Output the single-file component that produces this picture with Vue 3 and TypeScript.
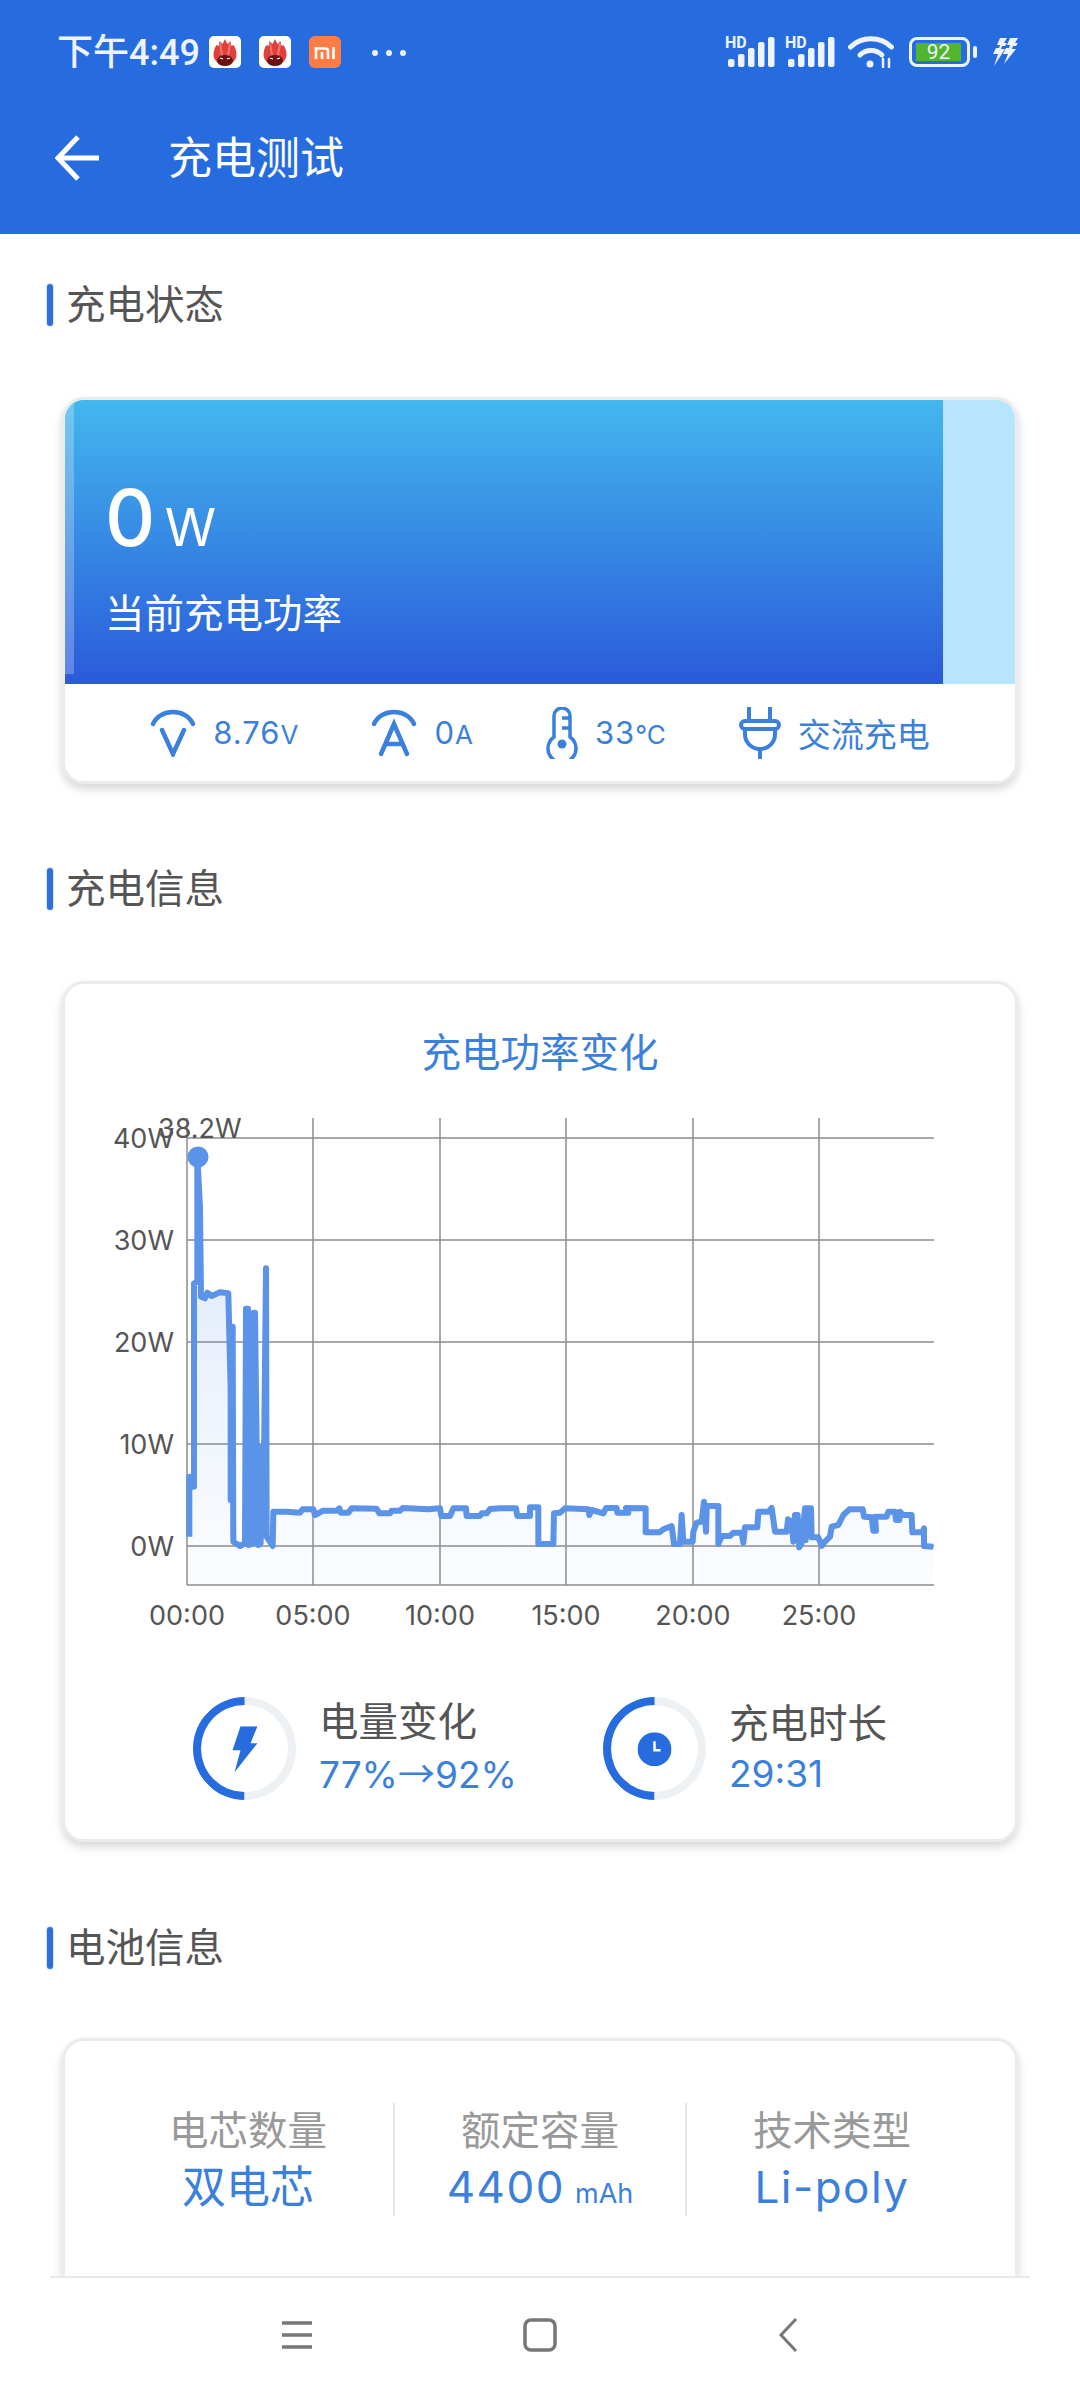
<script setup lang="ts">
import { computed } from "vue";

interface Stat {
  label: string;
  value: string;
  unit?: string;
  latin?: boolean;
}

const batteryStats: Stat[] = [
  { label: "电芯数量", value: "双电芯" },
  { label: "额定容量", value: "4400", unit: "mAh", latin: true },
  { label: "技术类型", value: "Li-poly", latin: true },
];

const yTicks = [
  { label: "40W", y: 1138 },
  { label: "30W", y: 1240 },
  { label: "20W", y: 1342 },
  { label: "10W", y: 1444 },
  { label: "0W", y: 1546 },
];
const xTicks = [
  { label: "00:00", x: 187 },
  { label: "05:00", x: 313 },
  { label: "10:00", x: 440 },
  { label: "15:00", x: 566 },
  { label: "20:00", x: 693 },
  { label: "25:00", x: 819 },
];

// traced from the recording, [x, y] in page pixels
const headSamples = [
  [268, 1340], [268, 1160], [278, 1160], [278, 1190], [282, 1190], [282, 580], [292, 575], [292, 200],
  [300, 350], [303, 620], [315, 625], [322, 608], [335, 618], [360, 607], [385, 610], [392, 900],
  [392, 1230], [398, 710], [400, 1355], [420, 1368], [435, 1360], [438, 656], [444, 656], [446, 1365],
  [460, 1360], [461, 668], [465, 668], [470, 1060], [475, 1365], [482, 1360], [486, 1070], [490, 1300],
  [498, 535], [500, 1340], [518, 1368], [520, 1265], [560, 1265], [600, 1268], [608, 1258], [640, 1258],
  [645, 1275], [670, 1262], [710, 1262], [718, 1255], [722, 1268], [745, 1268], [755, 1255], [830, 1256],
  [838, 1270], [870, 1270], [875, 1262], [900, 1262], [908, 1254], [985, 1258], [1020, 1255], [1024, 1278],
  [1050, 1278], [1060, 1255], [1098, 1255], [1100, 1278], [1140, 1278], [1145, 1270], [1160, 1270],
  [1170, 1257], [1200, 1258],
].map(([x, y]) => [100 + x / 3, 1090 + y / 3]);

const tailSamples = [
  [0, 325], [48, 325], [52, 348], [90, 348], [90, 322], [115, 322], [115, 432], [160, 432], [162, 340],
  [180, 338], [195, 325], [265, 328], [268, 345], [275, 330], [310, 340], [318, 324], [350, 324], [352, 338],
  [385, 338], [378, 324], [437, 325], [437, 397], [478, 397], [490, 388], [515, 378], [522, 432], [540, 432],
  [545, 345], [550, 425], [578, 425], [580, 395], [590, 368], [605, 365], [612, 305], [618, 395], [620, 318],
  [655, 318], [655, 432], [665, 408], [690, 408], [700, 398], [725, 398], [730, 428], [735, 382], [772, 382],
  [775, 335], [805, 335], [815, 324], [825, 395], [860, 395], [864, 358], [875, 365], [880, 425], [885, 345],
  [893, 345], [898, 442], [905, 430], [915, 325], [917, 420], [922, 325], [933, 325], [935, 412], [955, 412],
  [965, 438], [975, 425], [990, 410], [995, 380], [1015, 375], [1030, 345], [1048, 328], [1088, 328],
  [1092, 350], [1115, 352], [1120, 392], [1128, 392], [1125, 350], [1160, 350], [1165, 335], [1185, 335],
  [1188, 360], [1198, 360], [1200, 335], [1208, 345], [1235, 345], [1237, 397], [1268, 397], [1272, 385],
  [1272, 438], [1300, 440],
].map(([x, y]) => [500 + x / 3, 1400 + y / 3]);

const linePoints = computed(() =>
  [...headSamples.slice(0, -1), ...tailSamples].map((p) => p.join(",")).join(" "),
);
const areaPoints = computed(() => `189,1585 ${linePoints.value} 934,1585`);
</script>

<template>
  <div class="screen">
    <header class="appbar">
      <div class="status">
        <span class="clock">下午4:49</span>
        <svg v-for="n in 2" :key="n" class="app-icon" viewBox="0 0 32 32">
          <rect width="32" height="32" rx="5" fill="#fff" />
          <path d="M16 3l2.500 5 3-3 1 5 2-1c2 3 3 6 3 10 0 5-5 10-11.500 10S4.500 24 4.500 19c0-4 1-7 3-10l2 1 1-5 3 3z" fill="#e0403c" />
          <path d="M11 7l2 12M21 7l-2 12" stroke="#f6736c" stroke-width="2" />
          <ellipse cx="16" cy="24.500" rx="8" ry="5.500" fill="#6d1010" />
          <path d="M11 22l3 1M21 22l-3 1" stroke="#fff" stroke-width="1.300" />
        </svg>
        <svg class="app-icon" viewBox="0 0 32 32">
          <rect width="32" height="32" rx="6" fill="#ff7d45" />
          <path d="M7 12.500h9.500a2.500 2.500 0 0 1 2.500 2.500v8M7 11v12M13 16v7M24.500 11v12" fill="none" stroke="#fff" stroke-width="2.600" />
        </svg>
        <span class="dots"><i></i><i></i><i></i></span>
        <span class="status-right">
          <svg v-for="n in 2" :key="n" class="signal" viewBox="0 0 50 32">
            <text x="0" y="12" class="hd">HD</text>
            <rect x="3" y="23" width="6.500" height="8" rx="2" />
            <rect x="13" y="18" width="6.500" height="13" rx="2" />
            <rect x="23" y="12" width="6.500" height="19" rx="2" />
            <rect x="33" y="6" width="6.500" height="25" rx="2" />
            <rect x="43" y="1" width="6.500" height="30" rx="2" />
          </svg>
          <svg class="wifi" viewBox="0 0 46 32" fill="none" stroke="#eef4ff" stroke-width="5" stroke-linecap="round">
            <path d="M2.500 11c11-11 30-11 41 0" />
            <path d="M12 19c6-6 16-6 22 0" />
            <circle cx="22" cy="28" r="3.500" fill="#eef4ff" stroke="none" />
            <path d="M35 23v8M41 23v8" stroke-width="2.500" />
          </svg>
          <span class="battery"><b>92</b></span>
          <svg class="charge" viewBox="0 0 26 28" fill="#eef4ff">
            <path d="M8 0h7l-3 5h3l-2 3h-3l-1 3h4L2 28l4-12H1l3-6h3l1-3H5z" />
            <path d="M18 0h8l-3 5h3l-2 3h-3l-1 3h4L12 26l4-10h-5l3-6h3l1-3h-3z" />
          </svg>
        </span>
      </div>
      <div class="toolbar">
        <svg class="back" viewBox="0 0 44 46" fill="none" stroke="#fff" stroke-width="5">
          <path d="M44 23H4" />
          <path d="M23 2L3 23l20 21" />
        </svg>
        <h1>充电测试</h1>
      </div>
    </header>

    <main class="content">
      <h2 class="section-title">充电状态</h2>
      <section class="card power-card">
        <div class="power-track">
          <div class="power-fill">
            <p class="power-value"><b>0</b> <span>W</span></p>
            <p class="power-label">当前充电功率</p>
          </div>
        </div>
        <div class="metrics">
          <div class="metric">
            <svg class="metric-icon" viewBox="0 0 46 48" fill="none" stroke="#3a80dc" stroke-width="4.500" stroke-linecap="round">
              <path d="M3 15C10 -1 36 -1 43 15" />
              <path d="M12 21l11 24 11-24" />
            </svg>
            <span>8.76<small>V</small></span>
          </div>
          <div class="metric">
            <svg class="metric-icon" viewBox="0 0 46 48" fill="none" stroke="#3a80dc" stroke-width="4.500" stroke-linecap="round">
              <path d="M3 15C10 -1 36 -1 43 15" />
              <path d="M10 45l13-30 13 30M15 35h16" />
            </svg>
            <span>0<small>A</small></span>
          </div>
          <div class="metric">
            <svg class="metric-icon thermo" viewBox="0 0 32 52" fill="none" stroke="#3a80dc" stroke-width="3.500">
              <path d="M8 30V9a8 8 0 0 1 16 0v21a14 14 0 1 1-16 0z" />
              <path d="M16 11h8M16 21h8" />
              <circle cx="16" cy="37" r="4.500" fill="#3a80dc" stroke="none" />
            </svg>
            <span>33<small>℃</small></span>
          </div>
          <div class="metric">
            <svg class="metric-icon plug" viewBox="0 0 42 52" fill="none" stroke="#3a80dc" stroke-width="4">
              <path d="M10 0v14M31 0v14" />
              <rect x="2" y="14" width="38" height="8" rx="4" />
              <path d="M6 22v5c0 9 7 15 15 15s15-6 15-15v-5" />
              <path d="M21 42v10" />
            </svg>
            <span class="metric-name">交流充电</span>
          </div>
        </div>
      </section>

      <h2 class="section-title second">充电信息</h2>
      <section class="card info-card">
        <h3 class="chart-title">充电功率变化</h3>
        <svg class="chart" viewBox="100 1100 860 540">
          <defs>
            <linearGradient id="area" x1="0" y1="1150" x2="0" y2="1585" gradientUnits="userSpaceOnUse">
              <stop offset="0" stop-color="#5b93e8" stop-opacity="0.22" />
              <stop offset="1" stop-color="#5b93e8" stop-opacity="0.02" />
            </linearGradient>
          </defs>
          <g class="grid">
            <line v-for="t in yTicks" :key="t.label" x1="187" x2="934" :y1="t.y" :y2="t.y" />
            <line v-for="t in xTicks" :key="t.label" :x1="t.x" :x2="t.x" y1="1118" y2="1585" />
            <line x1="187" x2="934" y1="1585" y2="1585" />
          </g>
          <polygon :points="areaPoints" fill="url(#area)" />
          <polyline class="series" :points="linePoints" />
          <circle cx="198" cy="1157" r="10.500" fill="#5b93e8" />
          <g class="axis-label">
            <text v-for="t in yTicks" :key="t.label" x="174" :y="t.y + 10" text-anchor="end">{{ t.label }}</text>
            <text v-for="t in xTicks" :key="t.label" :x="t.x" y="1625" text-anchor="middle">{{ t.label }}</text>
            <text x="158" y="1138">38.2W</text>
          </g>
        </svg>
        <div class="summary">
          <div class="summary-item">
            <span class="ring">
              <svg viewBox="0 0 26 46" class="ring-bolt"><path d="M9 0h17l-7 17h7L3 46l6-22H1z" fill="#266cdf" /></svg>
            </span>
            <div>
              <p class="summary-label">电量变化</p>
              <p class="summary-value">77%<span class="arrow">→</span>92%</p>
            </div>
          </div>
          <div class="summary-item">
            <span class="ring">
              <svg viewBox="0 0 34 34" class="ring-clock">
                <circle cx="17" cy="17" r="17" fill="#266cdf" />
                <path d="M17 9v9h6" fill="none" stroke="#fff" stroke-width="2.500" />
              </svg>
            </span>
            <div>
              <p class="summary-label">充电时长</p>
              <p class="summary-value">29:31</p>
            </div>
          </div>
        </div>
      </section>

      <h2 class="section-title third">电池信息</h2>
      <section class="card battery-card">
        <div v-for="s in batteryStats" :key="s.label" class="stat">
          <p class="stat-label">{{ s.label }}</p>
          <p class="stat-value" :class="{ latin: s.latin }">{{ s.value }}<small v-if="s.unit">{{ s.unit }}</small></p>
        </div>
      </section>
    </main>

    <nav class="navbar">
      <div class="nav-inner">
        <svg viewBox="0 0 32 28" class="nav-menu" stroke="#777" stroke-width="3.500">
          <path d="M1 2h30M1 14h30M1 26h30" />
        </svg>
        <svg viewBox="0 0 34 34" class="nav-home" fill="none" stroke="#777" stroke-width="3.500">
          <rect x="2" y="2" width="30" height="30" rx="6" />
        </svg>
        <svg viewBox="0 0 20 34" class="nav-back" fill="none" stroke="#777" stroke-width="3">
          <path d="M18 1L3 17l15 16" />
        </svg>
      </div>
    </nav>
  </div>
</template>

<style>
html,
body {
  margin: 0;
  background: #fff;
}
</style>

<style scoped>
.screen {
  width: 1080px;
  height: 2400px;
  display: flex;
  flex-direction: column;
  overflow: hidden;
  font-family: Inter, "Noto Sans CJK SC", sans-serif;
  background: #fff;
}
p,
h1,
h2,
h3 {
  margin: 0;
  font-weight: 400;
}
.appbar {
  height: 234px;
  flex: none;
  background: #266cdf;
  color: #fff;
}
.status {
  height: 104px;
  box-sizing: border-box;
  padding: 36px 62px 0 57px;
  display: flex;
  align-items: flex-start;
}
.clock {
  font-family: Roboto, "Noto Sans CJK SC", sans-serif;
  font-size: 36px;
  font-weight: 500;
  line-height: 34px;
  width: 152px;
  flex: none;
  white-space: nowrap;
  color: #eef4ff;
}
.app-icon {
  width: 32px;
  height: 32px;
  margin-right: 18px;
}
.dots {
  display: flex;
  gap: 8px;
  margin: 14px 0 0 13px;
}
.dots i {
  width: 6px;
  height: 6px;
  border-radius: 50%;
  background: #eef4ff;
}
.status-right {
  margin-left: auto;
  display: flex;
  align-items: center;
  gap: 10px;
}
.signal {
  width: 50px;
  height: 32px;
  fill: #eef4ff;
  overflow: visible;
}
.hd {
  font-size: 16px;
  font-family: Roboto, sans-serif;
  font-weight: 700;
}
.wifi {
  width: 46px;
  height: 32px;
  margin-left: 3px;
}
.battery {
  box-sizing: border-box;
  width: 61px;
  height: 30px;
  border: 3px solid #eef4ff;
  border-radius: 8px;
  padding: 3px 6px 3px 4px;
  position: relative;
  margin: 0 7px 0 5px;
}
.battery::after {
  content: "";
  position: absolute;
  right: -10px;
  top: 6px;
  width: 4px;
  height: 12px;
  border-radius: 2px;
  background: #eef4ff;
}
.battery b {
  display: block;
  height: 18px;
  background: #52b52f;
  color: #eef4ff;
  font-family: Roboto, sans-serif;
  font-size: 21px;
  font-weight: 400;
  line-height: 18px;
  text-align: center;
}
.charge {
  width: 26px;
  height: 28px;
  margin-left: 5px;
}
.toolbar {
  display: flex;
  align-items: center;
  padding: 24px 0 0 55px;
}
.back {
  width: 44px;
  height: 46px;
  margin-right: 69px;
}
.toolbar h1 {
  font-size: 44px;
  line-height: 60px;
}
.content {
  flex: 1;
  min-height: 0;
  overflow: hidden;
  padding: 41px 62px 0 62px;
}
.section-title {
  position: relative;
  height: 60px;
  margin-left: 4px;
  font-size: 39.500px;
  line-height: 60px;
  color: #555;
}
.section-title::before {
  content: "";
  position: absolute;
  left: -19px;
  top: 9px;
  width: 6px;
  height: 42px;
  border-radius: 3px;
  background: #2f6fdd;
  box-shadow: 0 0 0 1px #d9e6fa;
}
.section-title.second {
  margin-top: 75px;
}
.section-title.third {
  margin-top: 76px;
}
.card {
  margin-top: 62px;
  border: 3px solid #ececec;
  border-radius: 22px;
  background: #fff;
  box-shadow: 0 5px 10px rgba(0, 0, 0, 0.16);
  overflow: hidden;
}
.section-title.second + .card {
  margin-top: 62px;
}
.section-title.third + .card {
  margin-top: 60px;
}
.power-track {
  height: 284px;
  background: #b6e5fd;
}
.power-fill {
  position: relative;
  box-sizing: border-box;
  width: 878px;
  height: 100%;
  padding: 72px 0 0 40px;
  background: linear-gradient(180deg, #43b7ee, #2a5ada);
  color: #fff;
}
.power-fill::before {
  content: "";
  position: absolute;
  left: 0;
  top: 0;
  width: 9px;
  height: 274px;
  background: rgba(255, 255, 255, 0.25);
}
.power-value {
  height: 92px;
  line-height: 92px;
}
.power-value b {
  font-size: 78px;
  font-weight: 500;
}
.power-value span {
  font-size: 52px;
  margin-left: 5px;
}
.power-label {
  margin-top: 22px;
  font-size: 39.500px;
  line-height: 56px;
}
.metrics {
  height: 97px;
  display: flex;
  justify-content: center;
  align-items: center;
  gap: 72px;
  color: #3a80dc;
  font-size: 31px;
  letter-spacing: 1px;
}
.metric {
  display: flex;
  align-items: center;
  gap: 17px;
}
.metric small {
  font-size: 26px;
}
.metric-name {
  font-size: 33px;
  letter-spacing: 0;
}
.metric-icon {
  width: 46px;
  height: 48px;
}
.metric-icon.thermo {
  width: 32px;
  height: 52px;
}
.metric-icon.plug {
  width: 42px;
  height: 52px;
}
.info-card {
  height: 861px;
  box-sizing: border-box;
}
.chart-title {
  margin-top: 41px;
  font-size: 39.500px;
  line-height: 56px;
  text-align: center;
  color: #3a80dc;
}
.chart {
  display: block;
  width: 860px;
  height: 540px;
  margin: 19px 0 0 35px;
}
.grid line {
  stroke: #8c8c8c;
  stroke-width: 1.500;
}
.series {
  fill: none;
  stroke: #5b93e8;
  stroke-width: 6;
  stroke-linejoin: round;
}
.axis-label text {
  font-family: Inter, sans-serif;
  font-size: 27px;
  fill: #555;
}
.summary {
  display: flex;
  margin-top: 57px;
  padding-left: 128px;
}
.summary-item {
  display: flex;
  align-items: center;
  gap: 23px;
  width: 410px;
}
.ring {
  box-sizing: border-box;
  flex: none;
  width: 103px;
  height: 103px;
  border-radius: 50%;
  border: 8px solid #eef1f3;
  border-left-color: #266cdf;
  border-bottom-color: #266cdf;
  display: flex;
  align-items: center;
  justify-content: center;
  transform: rotate(45deg);
}
.ring svg {
  transform: rotate(-45deg);
}
.ring-bolt {
  width: 26px;
  height: 46px;
}
.ring-clock {
  width: 34px;
  height: 34px;
}
.summary-label {
  font-size: 39.500px;
  line-height: 50px;
  color: #555;
}
.summary-value {
  font-size: 37px;
  line-height: 50px;
  color: #3a80dc;
  white-space: nowrap;
}
.arrow {
  font-family: "Noto Sans CJK SC", sans-serif;
}
.battery-card {
  height: 400px;
  box-sizing: border-box;
  padding: 62px 38px 0;
  display: flex;
  align-items: flex-start;
}
.stat {
  flex: 1;
  height: 113px;
  text-align: center;
  border-left: 2px solid #e8e8e8;
}
.stat:first-child {
  border-left: 0;
}
.stat-label {
  font-size: 39.500px;
  line-height: 56px;
  color: #999;
}
.stat-value {
  font-size: 44px;
  line-height: 56px;
  color: #3a80dc;
}
.stat-value.latin {
  letter-spacing: 1.500px;
}
.stat-value small {
  font-size: 27px;
  margin-left: 10px;
  letter-spacing: 0;
}
.navbar {
  height: 124px;
  flex: none;
  background: #fff;
}
.nav-inner {
  height: 100%;
  margin: 0 50px;
  border-top: 2px solid #e8e8e8;
  box-sizing: border-box;
  display: flex;
  align-items: center;
  padding-bottom: 8px;
}
.nav-menu {
  width: 32px;
  height: 28px;
  margin-left: 231px;
}
.nav-home {
  width: 34px;
  height: 34px;
  margin-left: 210px;
}
.nav-back {
  width: 20px;
  height: 34px;
  margin-left: 221px;
}
</style>
